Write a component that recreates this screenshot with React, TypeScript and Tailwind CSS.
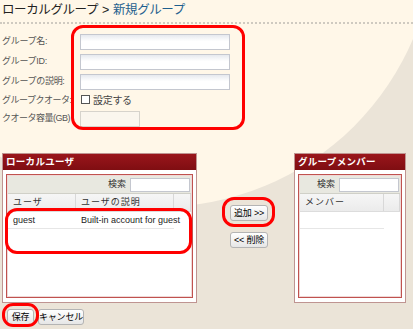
import React from "react";

const font = { fontFamily: '"Liberation Sans","Noto Sans CJK JP",sans-serif' };

function Input({ w, disabled }: { w: string; disabled?: boolean }) {
  return (
    <div
      className={`${w} h-[16px] border border-[#c4c7cf] ${
        disabled ? "bg-[#faf6ee] border-[#d6d3cc]" : "bg-gradient-to-b from-[#e6e9ee] to-white to-[45%]"
      }`}
    />
  );
}

function Btn({ children, w }: { children: React.ReactNode; w: string }) {
  return (
    <div
      className={`${w} h-[16px] flex items-center justify-center whitespace-nowrap rounded-[3px] border border-[#b4b4b4] bg-gradient-to-b from-white to-[#e6e6e6] text-[9px] tracking-[-0.2px] text-black leading-none`}
    >
      {children}
    </div>
  );
}

function Panel({
  title,
  w,
  cols,
  rows,
}: {
  title: string;
  w: string;
  cols: { label: string; w: string }[];
  rows: string[][];
}) {
  return (
    <div className={`${w} h-[150px] flex flex-col border border-[#bf9491] bg-white`}>
      <div className="h-[16px] shrink-0 bg-gradient-to-b from-[#9a161b] to-[#7f0e12] flex items-center pl-[3px] text-white text-[9.5px] font-bold tracking-[0.3px] whitespace-nowrap">
        {title}
      </div>
      <div className="flex-1 px-[3px] pt-[4px] pb-[4px] flex">
        <div className="flex-1 border border-[#c0524f] shadow-[inset_0_0_0_1px_#f0d8d6] flex flex-col">
          <div className="h-[18px] mx-[1px] mt-[1px] bg-[#e8e8e0] flex items-center justify-end pr-[1px] gap-[4px] border-b border-[#d0d0c8]">
            <span className="text-[9px] text-[#333]">検索</span>
            <div className="w-[60px] h-[14px] border border-[#c4c7cf] bg-white" />
          </div>
          <div className="h-[18px] mx-[1px] flex bg-gradient-to-b from-[#f6f6f6] to-[#ebebeb] border-b border-[#dcdcdc]">
            {cols.map((c, i) => (
              <div
                key={i}
                className={`${c.w} h-full flex items-center pl-[5px] text-[9px] text-[#333] tracking-[1px] border-r border-[#d8d8d8] whitespace-nowrap`}
              >
                {c.label}
              </div>
            ))}
          </div>
          {rows.map((r, i) => (
            <div key={i} className="h-[17px] mx-[1px] flex">
              {r.map((t, j) => (
                <div
                  key={j}
                  className={`${cols[j].w} h-full flex items-center pl-[5px] pt-[1px] text-[9px] text-[#222] border-b border-[#e6e6e6] whitespace-nowrap`}
                >
                  {t}
                </div>
              ))}
            </div>
          ))}
          {rows.length === 0 && (
            <div className="h-[17px] mx-[1px] flex">
              <div className={`${cols[0].w} h-full border-b border-[#e6e6e6]`} />
            </div>
          )}
        </div>
      </div>
    </div>
  );
}

export default function App() {
  const labels = ["グループ名:", "グループID:", "グループの説明:"];
  return (
    <div className="relative w-[413px] h-[329px] overflow-hidden bg-[#ebe4d8]" style={font}>
      <div className="absolute left-[-117px] top-[-345px] w-[552px] h-[552px] rounded-full bg-[#fff7e8]" />

      <div className="relative flex flex-col">
        <div className="h-[21px] pl-[2px] flex items-center text-[12.5px] leading-none tracking-[-0.4px] whitespace-nowrap">
          <span className="text-[#222]">ローカルグループ</span>
          <span className="text-[#222] mx-[4px]">&gt;</span>
          <span className="text-[#1e5f8e]">新規グループ</span>
        </div>
        <div className="border-t-2 border-dotted border-[#cfcac0] mt-[1px]" />

        <div className="flex flex-col pt-[8px] pl-[2px] text-[9px] text-[#555] tracking-[-0.3px] whitespace-nowrap">
          {labels.map((l) => (
            <div key={l} className="h-[20px] flex items-center">
              <div className="w-[78px]">{l}</div>
              <Input w="w-[150px]" />
            </div>
          ))}
          <div className="h-[17px] flex items-center">
            <div className="w-[78px] tracking-[-0.5px]">グループクオータ:</div>
            <div className="w-[9px] h-[9px] border border-[#555] bg-white ml-[1px] mb-[3px]" />
            <span className="ml-[3px] text-[#444] text-[10px]">設定する</span>
          </div>
          <div className="h-[20px] flex items-center">
            <div className="w-[78px] tracking-[-0.5px]">クオータ容量(GB)</div>
            <Input w="w-[60px]" disabled />
          </div>
        </div>

        <div className="flex mt-[24px] pl-[2px]">
          <Panel
            title="ローカルユーザ"
            w="w-[195px]"
            cols={[
              { label: "ユーザ", w: "w-[68px]" },
              { label: "ユーザの説明", w: "w-[98px]" },
              { label: "", w: "flex-1" },
            ]}
            rows={[["guest", "Built-in account for guest"]]}
          />
          <div className="w-[97px] flex flex-col items-center pl-[7px] pt-[52px] gap-[11px]">
            <Btn w="w-[38px]">追加 &gt;&gt;</Btn>
            <Btn w="w-[38px]">&lt;&lt; 削除</Btn>
          </div>
          <Panel
            title="グループメンバー"
            w="w-[112px]"
            cols={[
              { label: "メンバー", w: "w-[84px]" },
              { label: "", w: "flex-1" },
            ]}
            rows={[]}
          />
        </div>

        <div className="flex gap-[4px] mt-[6px] pl-[7px]">
          <Btn w="w-[27px]">保存</Btn>
          <Btn w="w-[46px]">キャンセル</Btn>
        </div>
      </div>

      <div className="absolute left-[71px] top-[25px] w-[174px] h-[105px] border-[3px] border-[#ff0000] rounded-[12px]" />
      <div className="absolute left-[5px] top-[208px] w-[187px] h-[46px] border-[3px] border-[#ff0000] rounded-[12px]" />
      <div className="absolute left-[222px] top-[197px] w-[53px] h-[30px] border-[3px] border-[#ff0000] rounded-[12px]" />
      <div className="absolute left-[2px] top-[303px] w-[37px] h-[24px] border-[3px] border-[#ff0000] rounded-[11px]" />
    </div>
  );
}
